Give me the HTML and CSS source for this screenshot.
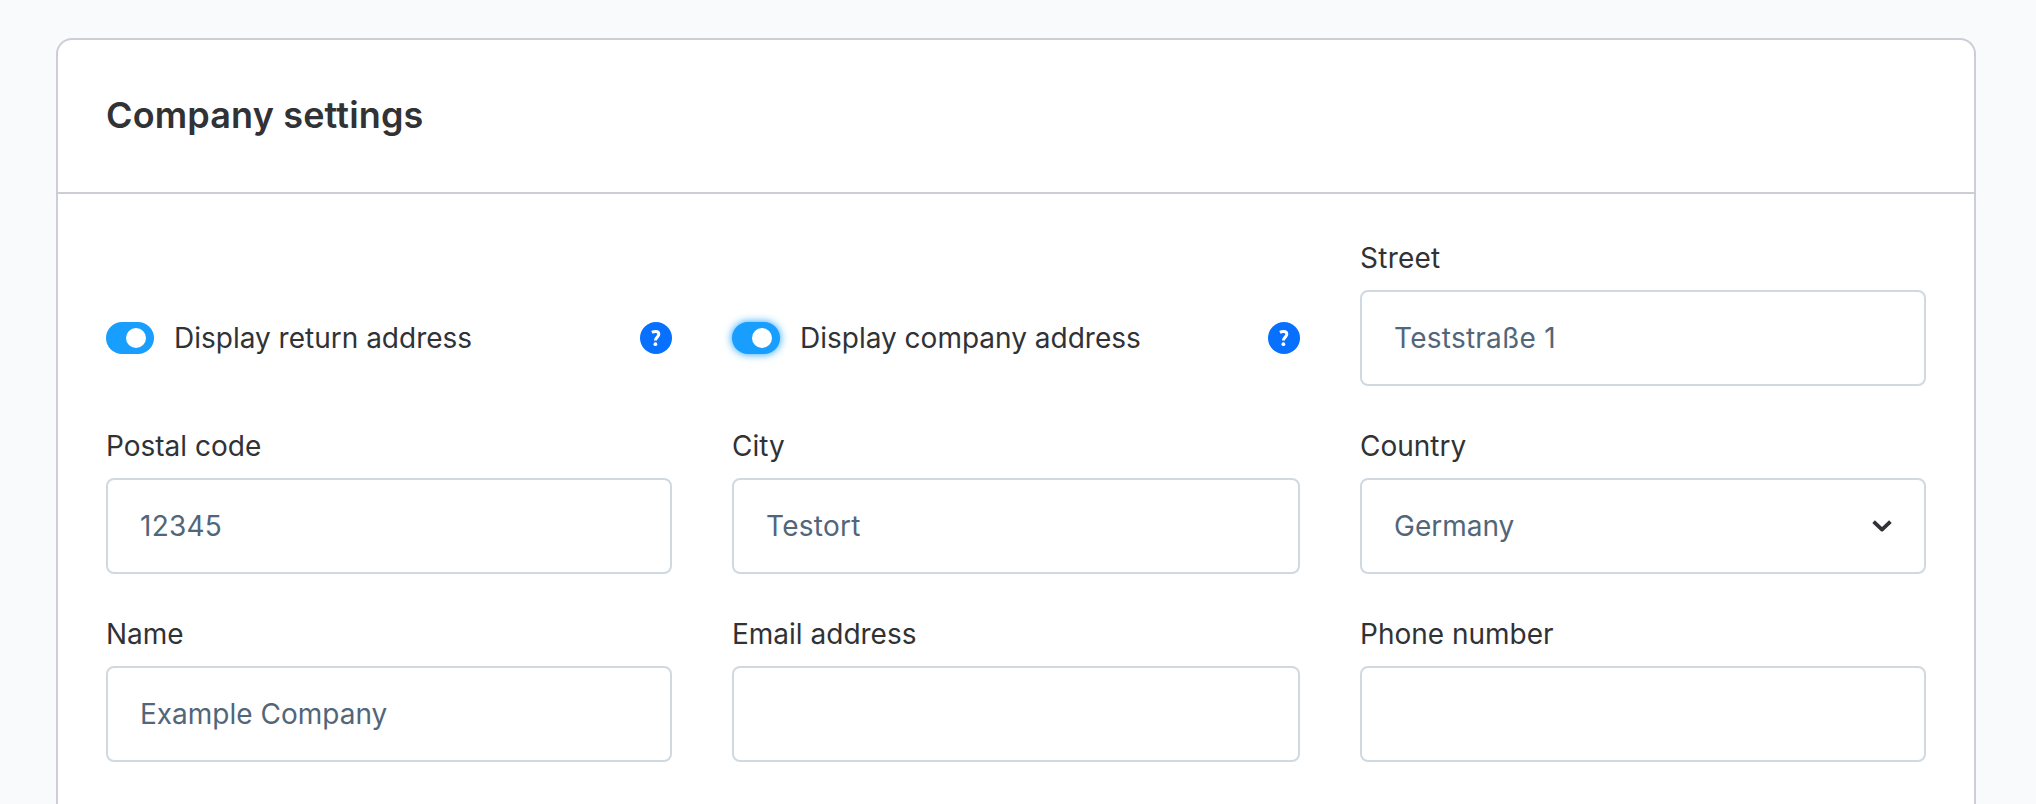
FILE: index.html
```html
<!DOCTYPE html>
<html lang="en">
<head>
<meta charset="utf-8">
<title>Company settings</title>
<link rel="stylesheet" href="styles.css">
</head>
<body>
<section class="card">
  <header class="card-header"><h1 class="card-title">Company settings</h1></header>
  <div class="card-content">
    <div class="switch-field">
      <span class="switch"><span class="knob"></span></span>
      <span class="switch-label">Display return address</span>
      <span class="help"><svg class="help-icon" viewBox="0 0 32 32"><path d="M11.9 10.4c1.1-.6 2.3-.9 3.7-.9 2 0 3.2.9 3.2 2.7 0 2.9-3.4 2.9-3.4 6.4"/><circle cx="15.4" cy="22.2" r="1.9"/></svg></span>
    </div>
    <div class="switch-field">
      <span class="switch focused"><span class="knob"></span></span>
      <span class="switch-label">Display company address</span>
      <span class="help"><svg class="help-icon" viewBox="0 0 32 32"><path d="M11.9 10.4c1.1-.6 2.3-.9 3.7-.9 2 0 3.2.9 3.2 2.7 0 2.9-3.4 2.9-3.4 6.4"/><circle cx="15.4" cy="22.2" r="1.9"/></svg></span>
    </div>
    <div class="field"><div class="label wide">Street</div><div class="input wide">Teststraße 1</div></div>
    <div class="field"><div class="label">Postal code</div><div class="input wide">12345</div></div>
    <div class="field"><div class="label">City</div><div class="input wide">Testort</div></div>
    <div class="field"><div class="label">Country</div><div class="input select">Germany<svg class="chevron" viewBox="0 0 20 12"><path d="M1.6 1.6 10 9.6l8.4-8"/></svg></div></div>
    <div class="field"><div class="label">Name</div><div class="input">Example Company</div></div>
    <div class="field"><div class="label">Email address</div><div class="input"></div></div>
    <div class="field"><div class="label">Phone number</div><div class="input"></div></div>
  </div>
</section>
</body>
</html>
```
FILE: styles.css
```css
* { box-sizing: border-box; }
body {
  margin: 0;
  height: 804px;
  overflow: hidden;
  padding: 38px 60px 0 56px;
  background: #f9fafc;
  color: #303236;
  font-family: Inter, sans-serif;
  font-size: 28px;
}
.card {
  height: 766px;
  background: #fff;
  border: 2px solid #cccdd5;
  border-bottom: 0;
  border-radius: 16px 16px 0 0;
}
.card-header {
  height: 154px;
  padding: 0 48px 2px;
  display: flex;
  align-items: center;
  border-bottom: 2px solid #cccdd5;
}
.card-title { margin: 0; font-size: 36px; font-weight: 600; line-height: 44px; letter-spacing: 0.15px; }
.card-content {
  padding: 48px 48px 0;
  display: grid;
  grid-template-columns: 566px 568px 566px;
  gap: 44px 60px;
}
.label { height: 32px; line-height: 32px; margin-bottom: 16px; white-space: nowrap; }
.input {
  height: 96px;
  padding: 0 32px;
  display: flex;
  align-items: center;
  border: 2px solid #d1d9e0;
  border-radius: 8px;
  color: #52667a;
}
.wide { letter-spacing: 0.25px; }
.select { justify-content: space-between; }
.chevron { width: 20px; height: 12px; fill: none; stroke: #303236; stroke-width: 3.8; stroke-linejoin: round; }
.switch-field {
  height: 96px;
  margin-top: 48px;
  display: flex;
  align-items: center;
}
.switch {
  width: 48px;
  height: 32px;
  padding-right: 8px;
  display: flex;
  align-items: center;
  justify-content: flex-end;
  border-radius: 16px;
  background: #189eff;
}
.focused { box-shadow: 0 0 8px #189eff; }
.knob { width: 20px; height: 20px; border-radius: 50%; background: #fff; }
.switch-label { flex: 1; margin-left: 20px; white-space: nowrap; }
.help { width: 32px; height: 32px; border-radius: 50%; background: #0870ff; }
.help-icon { display: block; width: 32px; height: 32px; fill: none; stroke: #fff; stroke-width: 3; }
.help-icon circle { fill: #fff; stroke: none; }
```
